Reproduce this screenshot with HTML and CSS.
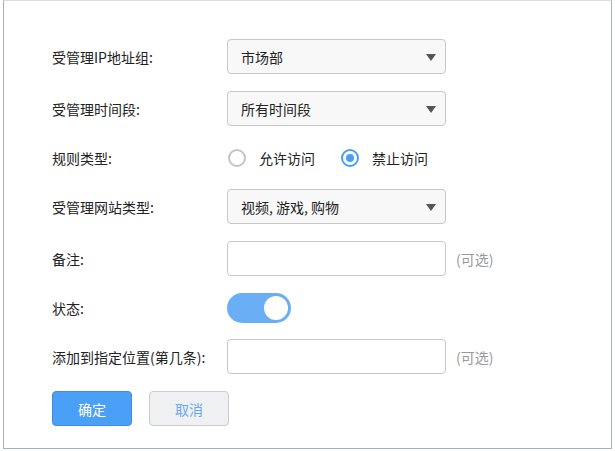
FILE: index.html
```html
<!DOCTYPE html>
<html lang="zh-CN">
<head>
  <meta charset="UTF-8">
  <title>访问控制规则</title>
  <link rel="stylesheet" href="styles.css">
</head>
<body>
  <div class="panel">
    <form class="rule-form">
      <div class="row">
        <label class="label">受管理IP地址组:</label>
        <div class="select"><span>市场部</span><i class="arrow"></i></div>
      </div>

      <div class="row">
        <label class="label">受管理时间段:</label>
        <div class="select"><span>所有时间段</span><i class="arrow"></i></div>
      </div>

      <div class="row row-radio">
        <label class="label">规则类型:</label>
        <div class="radios">
          <span class="radio"><i class="dot"></i>允许访问</span>
          <span class="radio checked"><i class="dot"></i>禁止访问</span>
        </div>
      </div>

      <div class="row">
        <label class="label">受管理网站类型:</label>
        <div class="select"><span>视频, 游戏, 购物</span><i class="arrow"></i></div>
      </div>

      <div class="row">
        <label class="label">备注:</label>
        <input class="text-input" type="text">
        <span class="hint">(可选)</span>
      </div>

      <div class="row row-switch">
        <label class="label">状态:</label>
        <span class="switch on"><i class="knob"></i></span>
      </div>

      <div class="row">
        <label class="label">添加到指定位置(第几条):</label>
        <input class="text-input" type="text">
        <span class="hint">(可选)</span>
      </div>

      <div class="buttons">
        <button type="button" class="btn btn-primary">确定</button>
        <button type="button" class="btn btn-cancel">取消</button>
      </div>
    </form>
  </div>
</body>
</html>
```

FILE: styles.css
```css
body {
  margin: 0;
  background: #fff;
  font-family: "Noto Sans CJK SC", sans-serif;
  font-size: 14px;
  color: #222;
}
.panel {
  margin-left: 3px;
  width: 607px;
  height: 447px;
  border: 1px solid #9fb3c8;
  border-top-color: #dddddd;
  box-sizing: content-box;
}
.rule-form {
  display: flex;
  flex-direction: column;
  gap: 17px;
  padding: 38px 0 0 48px;
}
.row {
  display: flex;
  align-items: center;
  height: 35px;
}
.row-radio {
  height: 29px;
}
.row-switch {
  height: 29px;
}
.label {
  width: 175px;
  flex: none;
}
.select {
  width: 219px;
  height: 35px;
  box-sizing: border-box;
  border: 1px solid #c8c8c8;
  border-radius: 4px;
  background: #f8f8f8;
  display: flex;
  align-items: center;
  justify-content: space-between;
  padding: 0 9px 0 13px;
  color: #222;
}
.arrow {
  width: 0;
  height: 0;
  border-left: 5px solid transparent;
  border-right: 5px solid transparent;
  border-top: 7px solid #555;
  margin-top: 1px;
}
.radios {
  display: flex;
  align-items: center;
  padding-left: 1px;
}
.radio {
  display: flex;
  align-items: center;
  margin-right: 26px;
}
.radio .dot {
  width: 18px;
  height: 18px;
  box-sizing: border-box;
  border: 2px solid #c4c4c4;
  border-radius: 50%;
  margin-right: 13px;
  position: relative;
}
.radio.checked .dot {
  border-color: #4a9ff5;
}
.radio.checked .dot::after {
  content: "";
  position: absolute;
  left: 3px;
  top: 3px;
  width: 8px;
  height: 8px;
  border-radius: 50%;
  background: #4a9ff5;
}
.text-input {
  width: 219px;
  height: 35px;
  box-sizing: border-box;
  border: 1px solid #c8c8c8;
  border-radius: 4px;
  background: #fff;
  margin: 0;
  padding: 0 10px;
  font: inherit;
}
.hint {
  color: #999;
  margin-left: 10px;
}
.switch {
  width: 64px;
  height: 30px;
  border-radius: 15px;
  background: #6aaef5;
  display: flex;
  align-items: center;
  justify-content: flex-end;
  padding: 0 1px;
  box-sizing: border-box;
}
.switch .knob {
  width: 28px;
  height: 28px;
  box-sizing: border-box;
  border-radius: 50%;
  background: #fff;
  border: 2px solid #6aaef5;
}
.buttons {
  display: flex;
  gap: 17px;
  margin-top: 0;
}
.btn {
  width: 80px;
  height: 35px;
  border-radius: 4px;
  font: inherit;
  cursor: pointer;
}
.btn-primary {
  background: #4aa0f7;
  border: 1px solid #3b8fe6;
  color: #fff;
}
.btn-cancel {
  background: #eff0f2;
  border: 1px solid #cccccc;
  color: #6aa9ef;
}
```
